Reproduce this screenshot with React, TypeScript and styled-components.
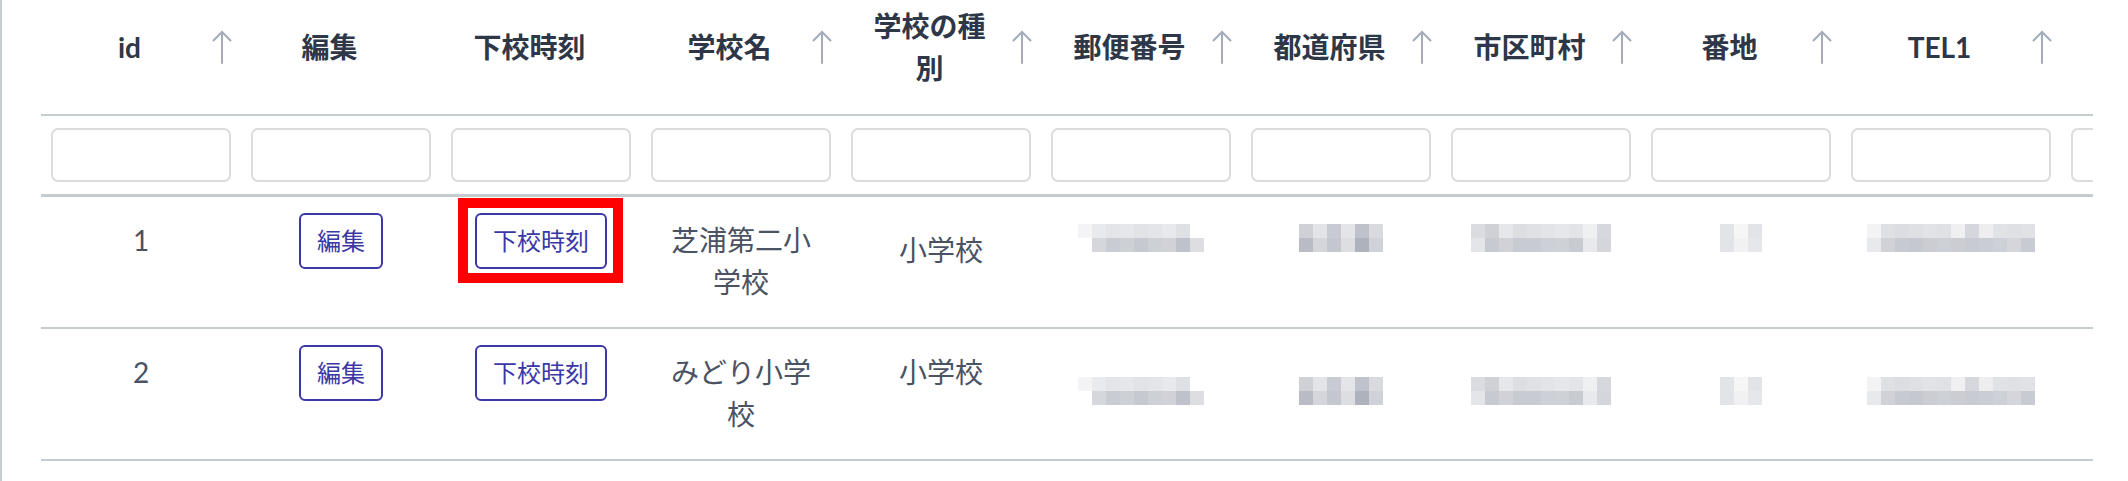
import styled, { createGlobalStyle } from "styled-components";

const GlobalStyle = createGlobalStyle`
  html, body {
    margin: 0;
    background: #fff;
  }
  body {
    font-family: "Lato", "Noto Sans CJK JP", sans-serif;
  }
`;

const Page = styled.div`
  min-height: 481px;
  box-sizing: border-box;
  border-left: 2px solid #c5cdd1;
  padding-left: 39px;
`;

const Viewport = styled.div`
  width: 2052px;
  overflow: hidden;
`;

const Table = styled.table`
  border-collapse: separate;
  border-spacing: 0;
  table-layout: fixed;
  width: 2220px;
`;

const HeadCell = styled.th`
  padding: 5px 9px 25px 10px;
  border-bottom: 2px solid #c4ccd0;
  vertical-align: middle;
  font-size: 28px;
  line-height: 42px;
  font-weight: 700;
  color: #2d3748;
`;

const HeadInner = styled.div`
  display: flex;
  align-items: center;
`;

const HeadLabel = styled.span`
  flex: 1;
  min-width: 0;
  padding: 0 14px 0 10px;
  text-align: center;
`;

const SortArrow = styled.svg<{ $hidden?: boolean }>`
  flex: none;
  width: 20px;
  height: 36px;
  visibility: ${(p) => (p.$hidden ? "hidden" : "visible")};
`;

const FilterCell = styled.td`
  padding: 12px 10px;
  border-bottom: 3px solid #c4ccd0;
`;

const FilterInput = styled.input`
  display: block;
  box-sizing: border-box;
  width: 100%;
  height: 54px;
  border: 2px solid #dcdcdc;
  border-radius: 7px;
  background: #fff;
  outline: none;
`;

const BodyCell = styled.td`
  padding: 16px 20px 24px;
  border-bottom: 2px solid #c4ccd0;
  vertical-align: top;
  text-align: center;
  font-size: 28px;
  line-height: 42px;
  color: #4a5263;
`;

const CellText = styled.div<{ $drop?: number }>`
  padding-top: ${(p) => 6 + (p.$drop ?? 0)}px;
`;

const ActionButton = styled.button<{ $marked?: boolean }>`
  position: relative;
  display: inline-block;
  padding: 8px 16px;
  border: 2px solid #3b37a6;
  border-radius: 6px;
  background: #fff;
  color: #3b37a6;
  font-family: inherit;
  font-size: 24px;
  line-height: 36px;
  cursor: pointer;

  ${(p) =>
    p.$marked &&
    `
    &::after {
      content: "";
      position: absolute;
      top: -17px;
      bottom: -16px;
      left: -19px;
      right: -18px;
      border: 10px solid #ff0000;
      pointer-events: none;
    }
  `}
`;

const Mosaic = styled.div<{ $cols: number; $top: number }>`
  display: inline-grid;
  grid-template-columns: repeat(${(p) => p.$cols}, 14px);
  grid-auto-rows: 14px;
  margin-top: ${(p) => p.$top}px;
  vertical-align: top;
`;

const MosaicCell = styled.span<{ $shade: string }>`
  background: ${(p) => p.$shade};
`;

type Column = { label: string; sortable: boolean; width: number };

// the last column runs past the scroll edge, only its filter box shows
const columns: Column[] = [
  { label: "id", sortable: true, width: 200 },
  { label: "編集", sortable: false, width: 200 },
  { label: "下校時刻", sortable: false, width: 200 },
  { label: "学校名", sortable: true, width: 200 },
  { label: "学校の種別", sortable: true, width: 200 },
  { label: "郵便番号", sortable: true, width: 200 },
  { label: "都道府県", sortable: true, width: 200 },
  { label: "市区町村", sortable: true, width: 200 },
  { label: "番地", sortable: true, width: 200 },
  { label: "TEL1", sortable: true, width: 220 },
  { label: "", sortable: false, width: 200 },
];

// blurred (mosaic) values, two rows of tiles each
const T = "transparent";
const blurs: Record<string, string[][]> = {
  zip: [
    ["#f4f4f6", "#e9eaed", "#e4e5e9", "#e6e7ea", "#e2e3e7", "#e4e5e9", "#e8e9ec", "#dfe0e4", T],
    [T, "#d5d7dc", "#c9ccd2", "#cdd0d5", "#c6c9d0", "#cdd0d5", "#d0d2d8", "#bfc2ca", "#dcdee2"],
  ],
  pref: [
    ["#cfd1d7", "#e3e4e8", "#c9cbd2", "#e4e5e9", "#bfc2ca", "#d8dadf"],
    ["#b9bcc5", "#d4d6dc", "#c4c7ce", "#dcdee2", "#aeb2bc", "#cfd2d8"],
  ],
  city: [
    ["#dadce1", "#cfd1d7", "#e6e7ea", "#dcdee2", "#e0e1e5", "#e3e4e8", "#e6e7ea", "#e3e4e8", "#eff0f2", "#d6d8dd"],
    ["#e4e5e9", "#c7cad1", "#d0d2d8", "#c9cbd2", "#c9cbd2", "#cdd0d6", "#ced1d6", "#c9cbd2", "#e8e9ec", "#d4d6db"],
  ],
  addr: [
    ["#e3e4e8", "#f6f6f7", "#e3e4e8"],
    ["#e3e4e8", "#f1f1f3", "#e6e7ea"],
  ],
  tel: [
    ["#f3f3f5", "#dfe0e4", "#dcdde2", "#dfe0e4", "#e2e3e7", "#e0e1e5", "#f0f0f3", "#d6d7dc", "#eeeef1", "#e1e2e6", "#dfe0e4", "#e1e2e6"],
    ["#e8e9ec", "#d0d2d8", "#c8cad1", "#c6c8cf", "#cbcdd3", "#cdd0d6", "#cbcdd3", "#c9cbd2", "#cacdd3", "#cdd0d6", "#d4d6db", "#c9cbd2"],
  ],
};

type School = { id: number; name: string; kind: string; kindDrop: number; blurTop: number; marked: boolean };

const schools: School[] = [
  { id: 1, name: "芝浦第二小学校", kind: "小学校", kindDrop: 10, blurTop: 11, marked: true },
  { id: 2, name: "みどり小学校", kind: "小学校", kindDrop: 0, blurTop: 32, marked: false },
];

const Arrow = ({ hidden }: { hidden: boolean }) => (
  <SortArrow $hidden={hidden} viewBox="0 0 20 36" fill="none" stroke="#a3acb9" strokeWidth="2" strokeLinecap="round">
    <path d="M10 34V3" />
    <path d="M1.5 11.5L10 3l8.5 8.5" />
  </SortArrow>
);

const Blur = ({ kind, top }: { kind: string; top: number }) => {
  const rows = blurs[kind];
  return (
    <Mosaic $cols={rows[0].length} $top={top}>
      {rows.flat().map((shade, i) => (
        <MosaicCell key={i} $shade={shade} />
      ))}
    </Mosaic>
  );
};

const App = () => {
  return (
    <>
      <GlobalStyle />
      <Page>
        <Viewport>
          <Table>
            <colgroup>
              {columns.map((c, i) => (
                <col key={i} style={{ width: c.width }} />
              ))}
            </colgroup>
            <thead>
              <tr>
                {columns.map((c, i) => (
                  <HeadCell key={i}>
                    <HeadInner>
                      <HeadLabel>{c.label}</HeadLabel>
                      <Arrow hidden={!c.sortable} />
                    </HeadInner>
                  </HeadCell>
                ))}
              </tr>
              <tr>
                {columns.map((_, i) => (
                  <FilterCell key={i}>
                    <FilterInput type="text" />
                  </FilterCell>
                ))}
              </tr>
            </thead>
            <tbody>
              {schools.map((s) => (
                <tr key={s.id}>
                  <BodyCell>
                    <CellText>{s.id}</CellText>
                  </BodyCell>
                  <BodyCell>
                    <ActionButton>編集</ActionButton>
                  </BodyCell>
                  <BodyCell>
                    <ActionButton $marked={s.marked}>下校時刻</ActionButton>
                  </BodyCell>
                  <BodyCell>
                    <CellText>{s.name}</CellText>
                  </BodyCell>
                  <BodyCell>
                    <CellText $drop={s.kindDrop}>{s.kind}</CellText>
                  </BodyCell>
                  <BodyCell>
                    <Blur kind="zip" top={s.blurTop} />
                  </BodyCell>
                  <BodyCell>
                    <Blur kind="pref" top={s.blurTop} />
                  </BodyCell>
                  <BodyCell>
                    <Blur kind="city" top={s.blurTop} />
                  </BodyCell>
                  <BodyCell>
                    <Blur kind="addr" top={s.blurTop} />
                  </BodyCell>
                  <BodyCell>
                    <Blur kind="tel" top={s.blurTop} />
                  </BodyCell>
                  <BodyCell />
                </tr>
              ))}
            </tbody>
          </Table>
        </Viewport>
      </Page>
    </>
  );
};

export default App;
